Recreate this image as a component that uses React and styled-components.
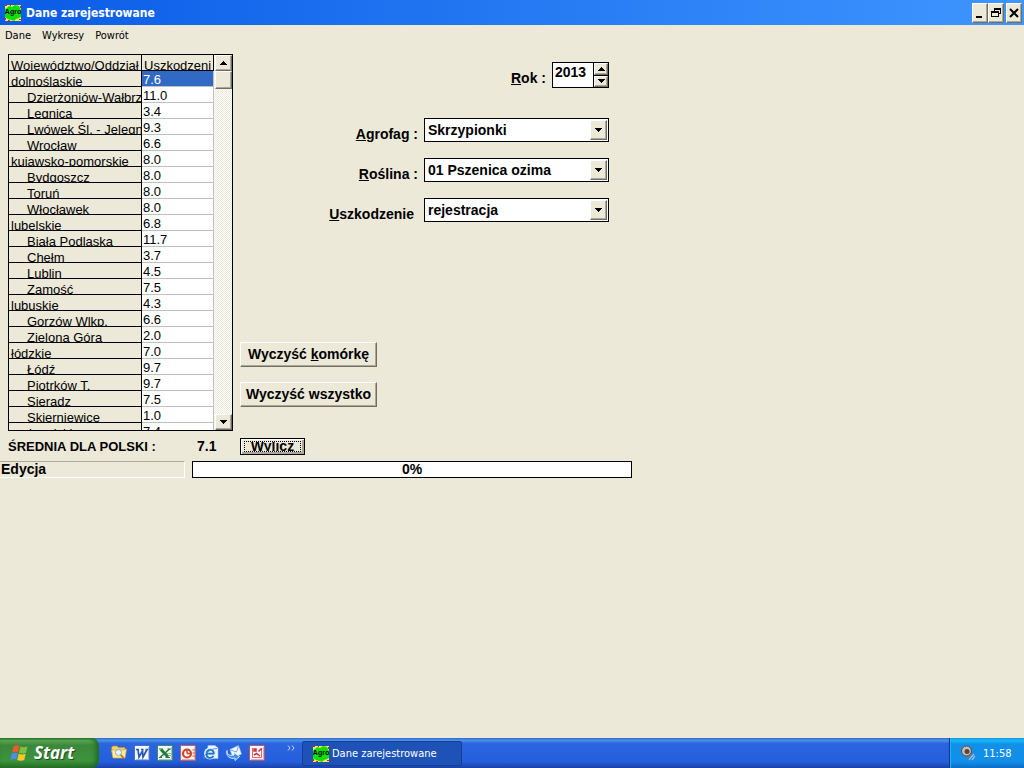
import { useState } from 'react';
import styled, { createGlobalStyle, css } from 'styled-components';

const GlobalStyle = createGlobalStyle`
  *, *::before, *::after {
    box-sizing: border-box;
  }
  body {
    margin: 0;
    background: #ece9d8;
    color: #000;
    font-family: 'Liberation Sans', Arial, sans-serif;
  }
  button, input, select {
    font-family: inherit;
    color: inherit;
    margin: 0;
    border-radius: 0;
  }
`;

const regions = [
  { name: 'dolnośląskie', value: '7.6' },
  { name: 'Dzierżoniów-Wałbrz', value: '11.0', isChild: true },
  { name: 'Legnica', value: '3.4', isChild: true },
  { name: 'Lwówek Śl. - Jelegn', value: '9.3', isChild: true },
  { name: 'Wrocław', value: '6.6', isChild: true },
  { name: 'kujawsko-pomorskie', value: '8.0' },
  { name: 'Bydgoszcz', value: '8.0', isChild: true },
  { name: 'Toruń', value: '8.0', isChild: true },
  { name: 'Włocławek', value: '8.0', isChild: true },
  { name: 'lubelskie', value: '6.8' },
  { name: 'Biała Podlaska', value: '11.7', isChild: true },
  { name: 'Chełm', value: '3.7', isChild: true },
  { name: 'Lublin', value: '4.5', isChild: true },
  { name: 'Zamość', value: '7.5', isChild: true },
  { name: 'lubuskie', value: '4.3' },
  { name: 'Gorzów Wlkp.', value: '6.6', isChild: true },
  { name: 'Zielona Góra', value: '2.0', isChild: true },
  { name: 'łódzkie', value: '7.0' },
  { name: 'Łódź', value: '9.7', isChild: true },
  { name: 'Piotrków T.', value: '9.7', isChild: true },
  { name: 'Sieradz', value: '7.5', isChild: true },
  { name: 'Skierniewice', value: '1.0', isChild: true },
  { name: 'małopolskie', value: '7.4' },
];

function Arrow({ up }) {
  return (
    <svg width="7" height="4" viewBox="0 0 7 4" shapeRendering="crispEdges" aria-hidden="true">
      <path d={up ? 'M3 0h1v1h1v1h1v1h1v1H0V3h1V2h1V1h1z' : 'M0 0h7v1H6v1H5v1H4v1H3V3H2V2H1V1H0z'} />
    </svg>
  );
}

function AgroIcon() {
  return (
    <svg width="16" height="16" viewBox="0 0 16 16" aria-hidden="true">
      <rect width="16" height="16" fill="#ffe95a" />
      <path d="M0 4 2 3 4 1l3 1 3-2 4 1 1 2 1 2v7l-2 1-3 1-2 2-3-1-3-1-2-1-1-1z" fill="#0be00b" />
      <path d="M0 0h2v1H0zM0 13h1v2H0zM3 15h2v1H3zM14 14h2v1h-2zM15 1h1v2h-1zM5 0h1v1H5z" fill="#e02020" />
      <text x="8" y="9" fontSize="7" fontWeight="700" textAnchor="middle" fontFamily="Liberation Sans, sans-serif">
        Agro
      </text>
    </svg>
  );
}

function StartFlag() {
  return (
    <svg width="19" height="18" viewBox="0 0 19 18" aria-hidden="true">
      <path d="M3.500 2.500Q6.500.5 9.500 2L8 8.300Q5 7 2 8.800z" fill="#f0592b" />
      <path d="M10.500 2.500Q14 4 17.500 2.300L16 8.800Q12.500 10.300 9 8.700z" fill="#7fc241" />
      <path d="M1.800 9.800Q4.800 8 7.800 9.300L6.300 15.500Q3.300 14.300.3 16z" fill="#4a8df0" />
      <path d="M8.700 9.800Q12.200 11.200 15.700 9.700L14.200 16Q10.700 17.600 7.200 16z" fill="#fbc52c" />
    </svg>
  );
}

function FolderIcon() {
  return (
    <svg width="16" height="16" viewBox="0 0 16 16" aria-hidden="true">
      <path d="M.5 2.500 2 1h4l1.500 1.500H14V12H2z" fill="#f4cf6a" stroke="#c08a22" strokeWidth=".7" />
      <path d="M2 13 .5 5H12l3.500-1L14 13z" fill="#ffeb9f" stroke="#d9a33a" strokeWidth=".7" />
      <circle cx="7.500" cy="7.500" r="3" fill="#e8f6ff" stroke="#8aa9bd" />
      <path d="m9.700 9.700 3.300 3.800" stroke="#b0762a" strokeWidth="1.700" />
    </svg>
  );
}

function OfficeIcon({ color, children }) {
  return (
    <svg width="16" height="16" viewBox="0 0 16 16" aria-hidden="true">
      <rect x=".5" y=".5" width="15" height="15" fill="#f4f7fb" stroke={color} strokeOpacity=".7" />
      <path d="M14.500 2v12.500H2" fill="none" stroke={color} strokeOpacity=".4" />
      <g fill="none" stroke={color}>
        {children}
      </g>
    </svg>
  );
}

function BrowserIcon() {
  return (
    <svg width="16" height="16" viewBox="0 0 16 16" aria-hidden="true">
      <path d="M5 .5h7L15 3v10.500H4z" fill="#eef6ff" stroke="#9cc2ee" strokeWidth=".6" />
      <circle cx="7" cy="8.500" r="6" fill="#dceeff" />
      <path d="M3.500 8.700h7.300c.2-5-6.700-5.300-7.300 0-.3 4.800 5 5.400 7 2.300" fill="none" stroke="#1f6fc6" strokeWidth="1.700" />
      <path d="M1 13.500C0 10 7 3.500 14 3.500" fill="none" stroke="#4c9be8" />
    </svg>
  );
}

function MailIcon() {
  return (
    <svg width="16" height="16" viewBox="0 0 16 16" aria-hidden="true">
      <path d="M4 4.500 12.500.5 15.500 9 7 13z" fill="#f3f9ff" stroke="#9cc2ee" strokeWidth=".6" />
      <path d="m4.500 5 6 2 2-6" fill="none" stroke="#7ba7d6" />
      <path d="M1 5.500c-.5 4 2.500 5.500 7 4.500V7.500l5.500 4L9 15.500V13c-5 1.500-9.500-2-8-7.500z" fill="#3a93e4" stroke="#e4f3ff" strokeWidth=".9" />
    </svg>
  );
}

function SpeakerIcon() {
  return (
    <svg width="16" height="16" viewBox="0 0 16 16" aria-hidden="true">
      <path d="M1 4 4 1l6 1 2 3v6l-4 2-5-3z" fill="#77777d" />
      <circle cx="6.500" cy="6" r="5" fill="#c4bcb5" stroke="#4e4b52" />
      <circle cx="7" cy="6.500" r="2.500" fill="#55443f" />
      <path d="m9 15 5-6M12 15l3-4" stroke="#8db8ff" strokeWidth="1.500" />
    </svg>
  );
}

function Combo({ id, label, value, noColon }) {
  return (
    <Field>
      <FieldLabel htmlFor={id} $spaced={noColon}>
        {label}
      </FieldLabel>
      <ComboBox>
        <Select id={id} defaultValue={value}>
          <option>{value}</option>
        </Select>
        <ComboArrow>
          <Arrow />
        </ComboArrow>
      </ComboBox>
    </Field>
  );
}

function App() {
  const [year, setYear] = useState(2013);
  const [selected, setSelected] = useState(0);

  return (
    <Page>
      <GlobalStyle />
      <TitleBar>
        <AgroIcon />
        <Title>Dane zarejestrowane</Title>
        <WindowButton aria-label="Minimalizuj">
          <svg width="12" height="12" viewBox="0 0 12 12" aria-hidden="true">
            <path d="M2 9h6v2H2z" />
          </svg>
        </WindowButton>
        <WindowButton aria-label="Przywróć">
          <svg width="12" height="12" viewBox="0 0 12 12" shapeRendering="crispEdges" aria-hidden="true">
            <path d="M4 1h7v6H9V6h1V3H5v1H4zM1 4h8v6H1zm1 2v3h6V6z" fillRule="evenodd" />
          </svg>
        </WindowButton>
        <WindowButton aria-label="Zamknij" $apart>
          <svg width="12" height="12" viewBox="0 0 12 12" aria-hidden="true">
            <path d="m2 2 8 8m0-8-8 8" stroke="#000" strokeWidth="2" />
          </svg>
        </WindowButton>
      </TitleBar>

      <MenuBar>
        <MenuItem>Dane</MenuItem>
        <MenuItem>Wykresy</MenuItem>
        <MenuItem>Powrót</MenuItem>
      </MenuBar>

      <Workspace>
        <GridFrame>
          <Table>
            <thead>
              <tr>
                <HeadCell $wide>
                  <CellText>Województwo/Oddział</CellText>
                </HeadCell>
                <HeadCell>
                  <CellText>Uszkodzeni</CellText>
                </HeadCell>
              </tr>
            </thead>
            <tbody>
              {regions.map((region, index) => (
                <tr key={region.name} onClick={() => setSelected(index)}>
                  <NameCell>
                    <CellText $indent={region.isChild}>{region.name}</CellText>
                  </NameCell>
                  <ValueCell $selected={selected === index}>
                    <ValueText>{region.value}</ValueText>
                  </ValueCell>
                </tr>
              ))}
            </tbody>
          </Table>
          <ScrollBar>
            <ScrollButton aria-label="W górę">
              <Arrow up />
            </ScrollButton>
            <ScrollThumb />
            <ScrollButton aria-label="W dół" $last>
              <Arrow />
            </ScrollButton>
          </ScrollBar>
        </GridFrame>

        <SidePanel>
          <Form>
            <YearField>
              <FieldLabel htmlFor="year">
                <u>R</u>ok :
              </FieldLabel>
              <Spinner>
                <YearInput id="year" value={year} onChange={(e) => setYear(Number(e.target.value) || 0)} />
                <SpinButtons>
                  <SpinButton aria-label="Następny rok" onClick={() => setYear(year + 1)}>
                    <Arrow up />
                  </SpinButton>
                  <SpinButton aria-label="Poprzedni rok" onClick={() => setYear(year - 1)}>
                    <Arrow />
                  </SpinButton>
                </SpinButtons>
              </Spinner>
            </YearField>
            <Combo id="agrofag" label={<><u>A</u>grofag :</>} value="Skrzypionki" />
            <Combo id="roslina" label={<><u>R</u>oślina :</>} value="01 Pszenica ozima" />
            <Combo id="uszkodzenie" label={<><u>U</u>szkodzenie</>} value="rejestracja" noColon />
          </Form>
          <Actions>
            <PushButton>
              <span>Wyczyść <u>k</u>omórkę</span>
            </PushButton>
            <PushButton>Wyczyść wszystko</PushButton>
          </Actions>
        </SidePanel>
      </Workspace>

      <Summary>
        <SummaryLabel>ŚREDNIA DLA POLSKI :</SummaryLabel>
        <SummaryValue>7.1</SummaryValue>
        <DefaultButton>
          <FocusRing>Wylicz</FocusRing>
        </DefaultButton>
      </Summary>

      <StatusRow>
        <StatusPanel>Edycja</StatusPanel>
        <Progress role="progressbar" aria-valuenow={0} aria-label="Postęp">
          0%
        </Progress>
      </StatusRow>

      <TaskBar>
        <StartButton>
          <StartFlag />
          Start
        </StartButton>
        <QuickLaunch>
          <QuickButton aria-label="Eksplorator"><FolderIcon /></QuickButton>
          <QuickButton aria-label="Word">
            <OfficeIcon color="#2a56b8">
              <path d="M2 4.500h3m2 0h2.500m2 0H14M4 4.500 5 12l3.500-6 .5 6 4-7.500" strokeWidth="1.700" />
            </OfficeIcon>
          </QuickButton>
          <QuickButton aria-label="Excel">
            <OfficeIcon color="#1f7d38">
              <path d="m4 4.500 7 7.500" strokeWidth="3" />
              <path d="M12.500 4 3 12.500" strokeWidth="1.500" />
              <path d="M2 4h4m4.500 0H14M2 12.500h3m3.500 0H13" />
              <path d="M10 8.500h4m-3 2h3" strokeOpacity=".5" />
            </OfficeIcon>
          </QuickButton>
          <QuickButton aria-label="PowerPoint">
            <OfficeIcon color="#cf4526">
              <circle cx="7" cy="8.500" r="4" strokeWidth="2.200" />
              <path d="M7 8.500V4.500m0 4h4" strokeWidth="1.500" />
              <path d="M12.500 5h2m-2 3h2m-2 3h2" />
            </OfficeIcon>
          </QuickButton>
          <QuickButton aria-label="Internet Explorer"><BrowserIcon /></QuickButton>
          <QuickButton aria-label="Outlook Express"><MailIcon /></QuickButton>
          <QuickButton aria-label="Picture Manager">
            <OfficeIcon color="#cc3038">
              <path d="M3.500 3v9.500h9V3" strokeOpacity=".7" />
              <path d="M5 4h2v2H5zM9.500 6.500l3-3M5 10l2.500-1.500L11 11" strokeWidth="1.500" />
            </OfficeIcon>
          </QuickButton>
        </QuickLaunch>
        <Chevron aria-label="Więcej">
          <svg width="8" height="6" viewBox="0 0 8 6" aria-hidden="true">
            <path d="m1 .5 2 2.500-2 2.500M5 .5l2 2.500-2 2.500" fill="none" stroke="#c4d9ff" />
          </svg>
        </Chevron>
        <TaskButton>
          <AgroIcon />
          Dane zarejestrowane
        </TaskButton>
        <Tray>
          <SpeakerIcon />
          <span>11:58</span>
        </Tray>
      </TaskBar>
    </Page>
  );
}

export default App;

const uiFont = css`
  font-family: 'DejaVu Sans Condensed', 'DejaVu Sans', Tahoma, sans-serif;
`;

const raised = css`
  background: #ece9d8;
  border: 1px solid;
  border-color: #fff #716f64 #716f64 #fff;
  box-shadow: inset -1px -1px 0 #aca899;
`;

const Page = styled.div`
  display: flex;
  flex-direction: column;
  min-height: 100vh;
`;

const TitleBar = styled.header`
  display: flex;
  align-items: center;
  height: 25px;
  padding: 0 2px 0 5px;
  background: linear-gradient(90deg, #0a5be6, #3f96ff);
`;

const Title = styled.h1`
  ${uiFont}
  flex: 1;
  margin: 0 0 0 5px;
  color: #fff;
  font-size: 12px;
  font-weight: 700;
`;

const WindowButton = styled.button`
  ${raised}
  display: flex;
  align-items: center;
  justify-content: center;
  width: 16px;
  height: 20px;
  padding: 0;
  margin-left: ${({ $apart }) => ($apart ? 2 : 0)}px;
`;

const MenuBar = styled.nav`
  display: flex;
  gap: 11px;
  height: 29px;
  padding: 3px 5px 0;
`;

const MenuItem = styled.button`
  ${uiFont}
  height: 14px;
  padding: 0;
  border: none;
  background: none;
  font-size: 11px;
`;

const Workspace = styled.main`
  display: flex;
  gap: 7px;
  padding-left: 8px;
`;

const GridFrame = styled.div`
  display: flex;
  align-items: flex-start;
  width: 225px;
  height: 377px;
  border: 1px solid #000;
  background: #fff;
  overflow: hidden;
`;

const Table = styled.table`
  flex: 1;
  border-collapse: separate;
  border-spacing: 0;
  table-layout: fixed;
  width: 205px;
  font-size: 13px;
`;

const cell = css`
  height: 16px;
  padding: 0;
  text-align: left;
  font-weight: 400;
  border-right: 1px solid #000;
  border-bottom: 1px solid #000;
`;

const HeadCell = styled.th`
  ${cell}
  width: ${({ $wide }) => ($wide ? '133px' : 'auto')};
  background: #ece9d8;
`;

const NameCell = styled.td`
  ${cell}
  background: #ece9d8;
`;

const ValueCell = styled.td`
  ${cell}
  border-color: #c0c0c0;
  background: ${({ $selected }) => ($selected ? '#316ac5' : '#fff')};
  color: ${({ $selected }) => ($selected ? '#fff' : '#000')};
`;

const CellText = styled.div`
  height: 15px;
  padding: 3px 0 0 ${({ $indent }) => ($indent ? 18 : 2)}px;
  line-height: 15px;
  white-space: nowrap;
  overflow: hidden;
`;

const ValueText = styled(CellText)`
  padding: 2px 0 0 1px;
  line-height: 14px;
`;

const ScrollBar = styled.div`
  display: flex;
  flex-direction: column;
  align-self: stretch;
  width: 18px;
  padding-left: 1px;
  background: repeating-conic-gradient(#ece9d8 0 25%, #fff 0 50%) 0 0 / 2px 2px;
`;

const ScrollButton = styled.button`
  ${raised}
  display: flex;
  align-items: center;
  justify-content: center;
  height: 16px;
  padding: 0;
  margin-top: ${({ $last }) => ($last ? 'auto' : 0)};
`;

const ScrollThumb = styled.div`
  ${raised}
  height: 18px;
`;

const SidePanel = styled.div`
  display: flex;
  flex-direction: column;
  justify-content: space-between;
  width: 369px;
  padding: 8px 0 24px;
`;

const Form = styled.form`
  display: flex;
  flex-direction: column;
  gap: 16px;
`;

const Field = styled.div`
  display: flex;
  justify-content: flex-end;
  align-items: flex-start;
  gap: 6px;
`;

const YearField = styled(Field)`
  margin-bottom: 14px;
`;

const FieldLabel = styled.label`
  padding-top: 8px;
  margin-right: ${({ $spaced }) => ($spaced ? 4 : 0)}px;
  font-size: 14px;
  line-height: 16px;
  font-weight: 700;
`;

const Spinner = styled.div`
  display: flex;
  width: 57px;
  height: 26px;
  border: 1px solid #000;
  background: #fff;
`;

const YearInput = styled.input`
  flex: 1;
  min-width: 0;
  height: 18px;
  padding: 0 0 0 2px;
  border: none;
  outline: none;
  background: none;
  font-size: 14px;
  font-weight: 700;
`;

const SpinButtons = styled.div`
  display: flex;
  flex-direction: column;
  gap: 1px;
  width: 15px;
  border-left: 1px solid #000;
  background: #000;
`;

const SpinButton = styled.button.attrs({ type: 'button' })`
  ${raised}
  display: flex;
  flex: 1;
  align-items: center;
  justify-content: center;
  padding: 0;
`;

const ComboBox = styled.div`
  position: relative;
  width: 185px;
  height: 24px;
`;

const Select = styled.select`
  appearance: none;
  display: block;
  width: 100%;
  height: 100%;
  padding: 0 20px 0 3px;
  border: 1px solid #000;
  outline: none;
  background: #fff;
  font-size: 14px;
  font-weight: 700;
`;

const ComboArrow = styled.span`
  ${raised}
  position: absolute;
  top: 2px;
  right: 2px;
  bottom: 2px;
  display: flex;
  align-items: center;
  justify-content: center;
  width: 17px;
  pointer-events: none;
`;

const Actions = styled.div`
  display: flex;
  flex-direction: column;
  align-items: flex-start;
  gap: 15px;
`;

const PushButton = styled.button`
  ${raised}
  width: 137px;
  height: 25px;
  padding: 0 0 2px;
  font-size: 14px;
  font-weight: 700;
  white-space: nowrap;
`;

const Summary = styled.section`
  display: flex;
  align-items: center;
  height: 30px;
  padding-left: 8px;
  font-size: 14px;
  font-weight: 700;
`;

const SummaryLabel = styled.span`
  width: 189px;
  font-size: 13px;
`;

const SummaryValue = styled.span`
  width: 43px;
`;

const DefaultButton = styled.button`
  width: 65px;
  height: 17px;
  padding: 1px 3px;
  border: 1px solid #000;
  background: #ece9d8;
  box-shadow: inset 1px 1px 0 #fff, inset -2px -2px 0 #aca899;
  font-size: 14px;
  font-weight: 700;
`;

const FocusRing = styled.span`
  display: block;
  height: 11px;
  border: 1px dotted #000;
  line-height: 9px;
  overflow: hidden;
`;

const StatusRow = styled.footer`
  display: flex;
  gap: 7px;
  font-size: 14px;
  line-height: 15px;
  font-weight: 700;
`;

const StatusPanel = styled.div`
  width: 185px;
  height: 17px;
  padding-left: 1px;
  border: 1px solid;
  border-color: #aca899 #fff #fff transparent;
  border-left: none;
`;

const Progress = styled.div`
  width: 440px;
  height: 17px;
  border: 1px solid #000;
  background: #fff;
  text-align: center;
`;

const TaskBar = styled.footer`
  ${uiFont}
  display: flex;
  align-items: stretch;
  height: 30px;
  margin-top: auto;
  background: linear-gradient(#3168d5, #4993e6 8%, #2b65e0 18%, #245edb 80%, #1941a5);
  color: #fff;
  font-size: 11px;
`;

const StartButton = styled.button`
  display: flex;
  align-items: center;
  gap: 5px;
  width: 99px;
  padding: 0 0 1px 10px;
  border: none;
  border-radius: 0 8px 8px 0;
  background: linear-gradient(#2f7a2f, #5eac56 8%, #3c873c 24%, #3c943c 75%, #2a6e2a);
  box-shadow: inset -3px 0 5px #1f6a1f;
  color: #fff;
  font-family: 'Open Sans', sans-serif;
  font-size: 17px;
  font-weight: 700;
  font-style: italic;
  text-shadow: 1px 1px 1px #1d4a1d;
`;

const QuickLaunch = styled.div`
  display: flex;
  align-items: center;
  gap: 7px;
  padding-left: 12px;
`;

const QuickButton = styled.button`
  display: flex;
  padding: 0;
  border: none;
  background: none;
`;

const Chevron = styled.button`
  display: flex;
  align-items: flex-start;
  justify-content: center;
  width: 32px;
  padding: 7px 0 0 10px;
  margin-left: 5px;
  border: none;
  background: none;
`;

const TaskButton = styled.button`
  ${uiFont}
  display: flex;
  align-items: center;
  gap: 3px;
  width: 160px;
  height: 25px;
  margin: 3px 0 0;
  padding: 0 0 0 10px;
  border: 1px solid #173d96;
  border-radius: 2px;
  background: #1e52b7;
  color: #fff;
  font-size: 11px;
  white-space: nowrap;
`;

const Tray = styled.div`
  display: flex;
  align-items: center;
  gap: 7px;
  width: 75px;
  margin-left: auto;
  padding-left: 10px;
  border-left: 1px solid #092e8c;
  background: linear-gradient(#1290e8, #19b9f3 8%, #1290e8 20%, #118ee8 80%, #0d6cc4);
  box-shadow: inset 1px 0 0 #19b9f3;
`;
